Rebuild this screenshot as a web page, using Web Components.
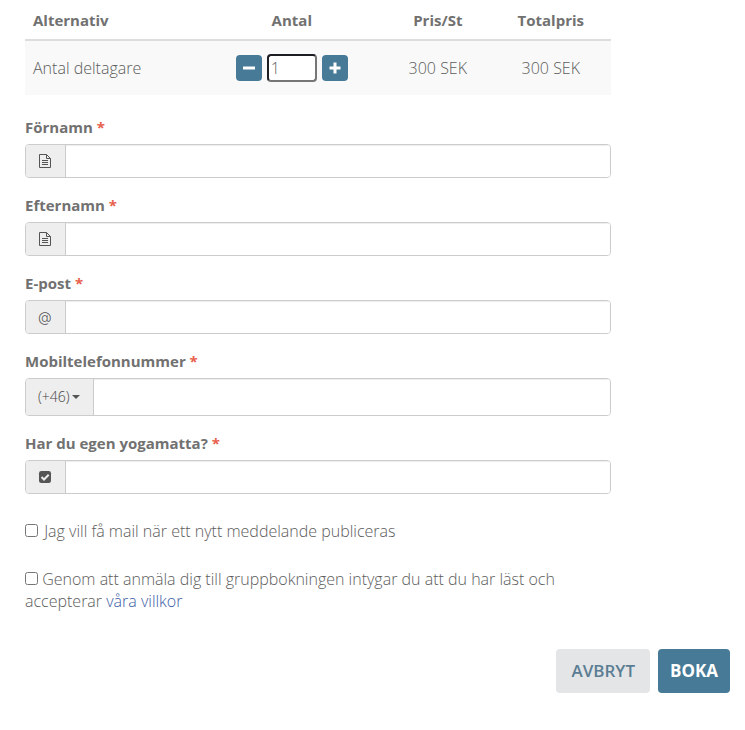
<!DOCTYPE html>
<html lang="sv">
<head>
<meta charset="utf-8">
<meta name="viewport" content="width=device-width, initial-scale=1">
<title>Bokning</title>
<style>
  body {
    margin: 0; background: #fff; color: #5c5c5c;
    font: 300 16px/22px "Open Sans", "Noto Sans", sans-serif;
    --brand: #467a96; --line: #ccc; --danger: #e8604c; --strong: #717171;
  }
</style>
</head>
<body>
<booking-page></booking-page>

<script>
const ICONS = {
  file: '<svg width="14" height="14" viewBox="0 0 14 14" fill="none" stroke="currentColor" aria-hidden="true"><path d="M1.5.5h7l4 4v9h-11z"/><path d="M8.5.5v4h4M4 6.5h6M4 8.5h6M4 10.5h6"/></svg>',
  at: '<span class="at" aria-hidden="true">@</span>',
  check: '<svg width="14" height="14" viewBox="0 0 14 14" aria-hidden="true"><rect x="1" y="1" width="12" height="12" rx="2.3" fill="currentColor"/><path d="M3.5 7l2.5 2.5 4.7-4.7" fill="none" stroke="#eee" stroke-width="2"/></svg>',
  minus: '<svg width="12" height="12" viewBox="0 0 12 12" aria-hidden="true"><path d="M0 4.5h12v3H0z" fill="currentColor"/></svg>',
  plus: '<svg width="12" height="12" viewBox="0 0 12 12" aria-hidden="true"><path d="M4.5.5h3v4h4v3h-4v4h-3v-4h-4v-3h4z" fill="currentColor"/></svg>',
};

// Antalsväljare med minus- och plusknapp
class QtyStepper extends HTMLElement {
  connectedCallback() {
    this.attachShadow({ mode: 'open' });
    this.shadowRoot.innerHTML = `
      <style>
        :host { display: flex; justify-content: center; align-items: center; gap: 5px; }
        button { display: flex; align-items: center; justify-content: center; width: 26px; height: 26px;
                 padding: 0; border: 0; border-radius: 4px; background: var(--brand); color: #fff; cursor: pointer; }
        input { box-sizing: border-box; width: 50px; height: 28px; margin: 0; padding: 0 2px; font: inherit;
                color: inherit; background: #fff; border: 2px solid; border-color: #1c1e24 #767676 #767676 #1c1e24;
                border-radius: 4px; outline: none; }
      </style>
      <button type="button" id="minus" aria-label="Minska">${ICONS.minus}</button>
      <input type="text" inputmode="numeric" value="1" aria-label="Antal deltagare">
      <button type="button" id="plus" aria-label="Öka">${ICONS.plus}</button>
    `;
    this.input = this.shadowRoot.querySelector('input');
    this.shadowRoot.getElementById('minus').addEventListener('click', () => this.step(-1));
    this.shadowRoot.getElementById('plus').addEventListener('click', () => this.step(1));
    this.input.addEventListener('change', () => this.step(0));
  }

  step(delta) {
    const n = Math.max(1, (parseInt(this.input.value) || 1) + delta);
    this.input.value = n;
    this.dispatchEvent(new CustomEvent('qty-change', { detail: n, bubbles: true, composed: true }));
  }
}
customElements.define('qty-stepper', QtyStepper);

class PriceTable extends HTMLElement {
  connectedCallback() {
    this.attachShadow({ mode: 'open' });
    this.shadowRoot.innerHTML = `
      <style>
        :host { display: block; }
        table { width: 100%; border-collapse: separate; border-spacing: 0; table-layout: fixed; }
        th, td { padding: 8px; text-align: center; }
        th { font-size: 15px; font-weight: 700; color: var(--strong); border-bottom: 2px solid #ddd; }
        td { padding: 13px 8px; background: #f9f9f9; }
        th:first-child, td:first-child { text-align: left; }
        .qty { width: 170px; }
        .price { width: 90px; }
        .total { width: 104px; }
      </style>
      <table>
        <thead>
          <tr><th>Alternativ</th><th class="qty">Antal</th><th class="price">Pris/St</th><th class="total">Totalpris</th></tr>
        </thead>
        <tbody>
          <tr><td>Antal deltagare</td><td><qty-stepper></qty-stepper></td><td>300 SEK</td><td id="sum">300 SEK</td></tr>
        </tbody>
      </table>
    `;
    this.shadowRoot.addEventListener('qty-change', e => {
      this.shadowRoot.getElementById('sum').textContent = `${e.detail * 300} SEK`;
    });
  }
}
customElements.define('price-table', PriceTable);

// Etikett och textfält; attributet icon väljer ikon, prefix visar landskod i stället
class FormField extends HTMLElement {
  connectedCallback() {
    const prefix = this.getAttribute('prefix');
    const addon = prefix
      ? `<span class="code"><select aria-label="Landskod"><option>${prefix}</option></select>
         <svg width="8" height="4" viewBox="0 0 8 4" aria-hidden="true"><path d="M0 0h8L4 4z" fill="currentColor"/></svg></span>`
      : `<span class="addon">${ICONS[this.getAttribute('icon')]}</span>`;
    this.attachShadow({ mode: 'open' });
    this.shadowRoot.innerHTML = `
      <style>
        :host { display: flex; flex-direction: column; gap: 6px; }
        label { font-size: 15px; font-weight: 700; color: var(--strong); }
        b { color: var(--danger); font-weight: 700; }
        .group { display: flex; height: 34px; box-sizing: border-box; overflow: hidden;
                 border: 1px solid var(--line); border-radius: 4px; }
        .group.tall { height: 38px; }
        .group:focus-within { border-color: var(--brand); }
        .addon, .code { display: flex; align-items: center; box-sizing: border-box; padding: 0 12px;
                        background: #eee; color: #555; border-right: 1px solid var(--line); }
        .addon { width: 40px; }
        .at { font: 300 14px/14px Inter, sans-serif; }
        .code { width: 68px; gap: 2px; }
        select { appearance: none; flex: none; padding: 0; border: 0; background: none; color: #444;
                 font: 300 14px/22px "Open Sans", sans-serif; outline: none; cursor: pointer; }
        svg { flex: none; }
        input { flex: 1; min-width: 0; padding: 6px 12px; border: 0; outline: none; background: #fff;
                color: inherit; font: inherit; box-shadow: inset 0 1px 1px rgba(0,0,0,.075); }
      </style>
      <label for="field"><slot></slot> <b>*</b></label>
      <div class="group${prefix ? ' tall' : ''}">${addon}<input id="field" type="${this.getAttribute('type') || 'text'}" required></div>
    `;
  }
}
customElements.define('form-field', FormField);

class CheckLine extends HTMLElement {
  connectedCallback() {
    this.attachShadow({ mode: 'open' });
    this.shadowRoot.innerHTML = `
      <style>
        :host { display: block; }
        input { width: 13px; height: 13px; margin: 0; }
        :host([spaced]) input { margin-right: 2px; }
        ::slotted(a) { color: #3c5ca4; text-decoration: none; }
      </style>
      <input type="checkbox" id="box"> <label for="box"><slot></slot></label> <slot name="link"></slot>
    `;
  }
}
customElements.define('check-line', CheckLine);

class ActionButton extends HTMLElement {
  connectedCallback() {
    this.attachShadow({ mode: 'open' });
    this.shadowRoot.innerHTML = `
      <style>
        :host { display: block; }
        button { height: 44px; padding: 0 15px; border: 0; border-radius: 4px; background: #e4e5e7;
                 color: #5a7d93; font: 600 17px/22px "Open Sans", sans-serif; cursor: pointer; }
        :host([primary]) button { padding: 0 12px; background: var(--brand); color: #fff; font-weight: 700; }
      </style>
      <button type="button"><slot></slot></button>
    `;
  }
}
customElements.define('action-button', ActionButton);

class BookingPage extends HTMLElement {
  connectedCallback() {
    this.attachShadow({ mode: 'open' });
    this.shadowRoot.innerHTML = `
      <style>
        :host { display: block; padding: 1px 15px 37px; }
        form { box-sizing: border-box; width: 83.33%; padding-left: 10px; }
        .fields { display: flex; flex-direction: column; gap: 16px; margin-top: 21px; }
        .checks { display: flex; flex-direction: column; gap: 26px; margin-top: 26px; }
        footer { display: flex; justify-content: flex-end; gap: 8px; margin-top: 37px; }
      </style>
      <form>
        <price-table></price-table>
        <div class="fields">
          <form-field icon="file">Förnamn</form-field>
          <form-field icon="file">Efternamn</form-field>
          <form-field icon="at" type="email">E-post</form-field>
          <form-field prefix="(+46)" type="tel">Mobiltelefonnummer</form-field>
          <form-field icon="check">Har du egen yogamatta?</form-field>
        </div>
        <div class="checks">
          <check-line spaced>Jag vill få mail när ett nytt meddelande publiceras</check-line>
          <check-line>Genom att anmäla dig till gruppbokningen intygar du att du har läst och accepterar<a slot="link" href="#villkor">våra villkor</a></check-line>
        </div>
      </form>
      <footer>
        <action-button>AVBRYT</action-button>
        <action-button primary>BOKA</action-button>
      </footer>
    `;
  }
}
customElements.define('booking-page', BookingPage);
</script>
</body>
</html>
